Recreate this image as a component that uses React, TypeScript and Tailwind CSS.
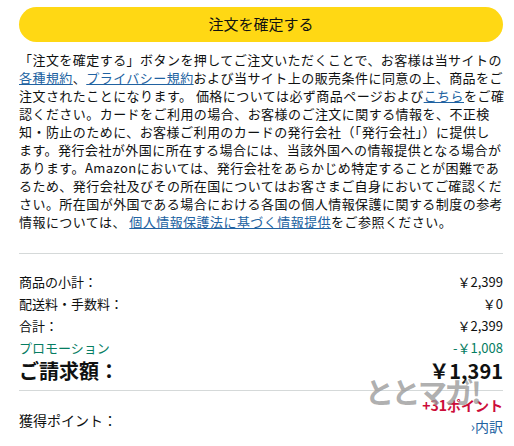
const FONT = { fontFamily: '"Noto Sans CJK JP", "Liberation Sans", sans-serif' };

function Row({ label, value, className = "" }: { label: string; value: string; className?: string }) {
  return (
    <div className={`flex justify-between items-center ${className}`}>
      <span>{label}</span>
      <span>{value}</span>
    </div>
  );
}

export default function App() {
  const link = "text-[#2162a1] underline";
  return (
    <div className="relative w-[514px] h-[446px] bg-white text-[#0f1111] overflow-hidden" style={FONT}>
      <div className="pl-[19px] pr-[11px] pt-[7px]">
        <button className="w-full h-[35px] rounded-full bg-[#ffd814] text-[15px] text-[#0f1111] flex items-center justify-center">
          注文を確定する
        </button>

        <p className="mt-[9px] text-[13px] leading-[18px] tracking-[0.45px] whitespace-nowrap">
          「注文を確定する」ボタンを押してご注文いただくことで、お客様は当サイトの<br />
          <a className={link}>各種規約</a>、<a className={link}>プライバシー規約</a>および当サイト上の販売条件に同意の上、商品をご<br />
          注文されたことになります。 価格については必ず商品ページおよび<a className={link}>こちら</a>をご確<br />
          認ください。カードをご利用の場合、お客様のご注文に関する情報を、不正検<br />
          知・防止のために、お客様ご利用のカードの発行会社（「発行会社」）に提供し<br />
          ます。発行会社が外国に所在する場合には、当該外国への情報提供となる場合が<br />
          あります。Amazonにおいては、発行会社をあらかじめ特定することが困難であ<br />
          るため、発行会社及びその所在国についてはお客さまご自身においてご確認くだ<br />
          さい。所在国が外国である場合における各国の個人情報保護に関する制度の参考<br />
          情報については、 <a className={link}>個人情報保護法に基づく情報提供</a>をご参照ください。
        </p>

        <div className="mt-[22px] border-t border-[#d5d9d9]" />

        <div className="mt-[17px] text-[13px] leading-[22px]">
          <Row label="商品の小計：" value="￥2,399" />
          <Row label="配送料・手数料：" value="￥0" />
          <Row label="合計：" value="￥2,399" />
          <Row label="プロモーション" value="-￥1,008" className="text-[#067d62]" />
          <Row label="ご請求額：" value="￥1,391" className="text-[20px] leading-[24px] font-bold" />
        </div>

        <div className="mt-[7px] border-t border-[#d5d9d9]" />

        <div className="flex justify-between items-start mt-[4px]">
          <span className="text-[14px] mt-[15px]">獲得ポイント：</span>
          <div className="flex flex-col items-end">
            <span className="text-[14px] font-bold text-[#cc0c39] leading-[20px]">+31ポイント</span>
            <span className="text-[14px] text-[#2162a1] leading-[22px]">›内訳</span>
          </div>
        </div>
      </div>

      <div className="absolute left-[365px] top-[377px] text-[29px] font-bold text-[#9a9a9a]/80 leading-none tracking-[-2.5px]">
        ととマガ!
      </div>
    </div>
  );
}
